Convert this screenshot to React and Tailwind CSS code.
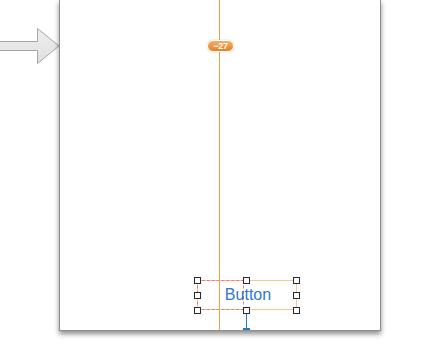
import React from "react";

function Handle() {
  return <div className="w-[7px] h-[7px] border border-[#2a2a2a] bg-white" />;
}

function HandleRow({ middle = true }) {
  return (
    <div className="grid grid-cols-[7px_42px_7px_43px_7px]">
      <Handle />
      <div />
      {middle ? <Handle /> : <div />}
      <div />
      <Handle />
    </div>
  );
}

export default function App() {
  return (
    <div
      className="relative w-[438px] h-[344px] overflow-hidden bg-white"
      style={{ fontFamily: '"Liberation Sans", Arial, sans-serif' }}
    >
      {/* Entry point arrow */}
      <svg
        className="absolute left-0 top-[27px]"
        width="61"
        height="38"
        viewBox="0 0 61 38"
      >
        <defs>
          <linearGradient id="ag" x1="0" y1="0" x2="0" y2="1">
            <stop offset="0" stopColor="#eeeeee" />
            <stop offset="1" stopColor="#e0e0e0" />
          </linearGradient>
        </defs>
        <path
          d="M-2 14.5 H37.5 V1.5 L59 19 L37.5 36.5 V23.5 H-2 Z"
          fill="url(#ag)"
          stroke="#a6a6a6"
          strokeWidth="1"
        />
      </svg>

      {/* View controller scene */}
      <div className="ml-[59px] w-[322px] h-[331px] bg-white border-x border-b border-[#8f8f8f] shadow-[0_3px_5px_rgba(0,0,0,0.45)] relative flex flex-col justify-end pb-[20px]">
        {/* Vertical center guide */}
        <div className="absolute left-[159px] top-0 bottom-0 w-px bg-[#efa04a]" />

        {/* Badge */}
        <div className="absolute left-[147px] top-[40px] w-[27px] h-[12px] rounded-full border border-white bg-gradient-to-b from-[#f6b063] to-[#e5801f] shadow-[0_0_1px_rgba(0,0,0,0.5)] flex items-center justify-center">
          <span className="text-[9px] leading-none font-bold text-white tracking-[-0.2px]">−27</span>
        </div>

        {/* Button with selection */}
        <div className="relative ml-[137px] w-[100px] h-[30px] border border-[#f9c88f] flex items-center justify-center">
          {/* red dashed frame */}
          <div className="absolute -left-px -top-px w-[47px] h-[30px] border border-dashed border-[#ef7d6d]" />
          <span className="relative text-[16px] leading-none text-[#2f74d0] ml-[2px]">Button</span>

          {/* blue constraint */}
          <div className="absolute left-[45px] top-[29px] h-[20px] w-[7px] flex flex-col items-center">
            <div className="flex-1 w-px bg-[#2a78c8]" />
            <div className="w-[7px] h-[2px] bg-[#2a78c8]" />
          </div>

          {/* selection handles */}
          <div className="absolute -left-[4px] -top-[4px] -bottom-[5px] flex flex-col justify-between">
            <HandleRow />
            <HandleRow middle={false} />
            <HandleRow />
          </div>
        </div>
      </div>
    </div>
  );
}
